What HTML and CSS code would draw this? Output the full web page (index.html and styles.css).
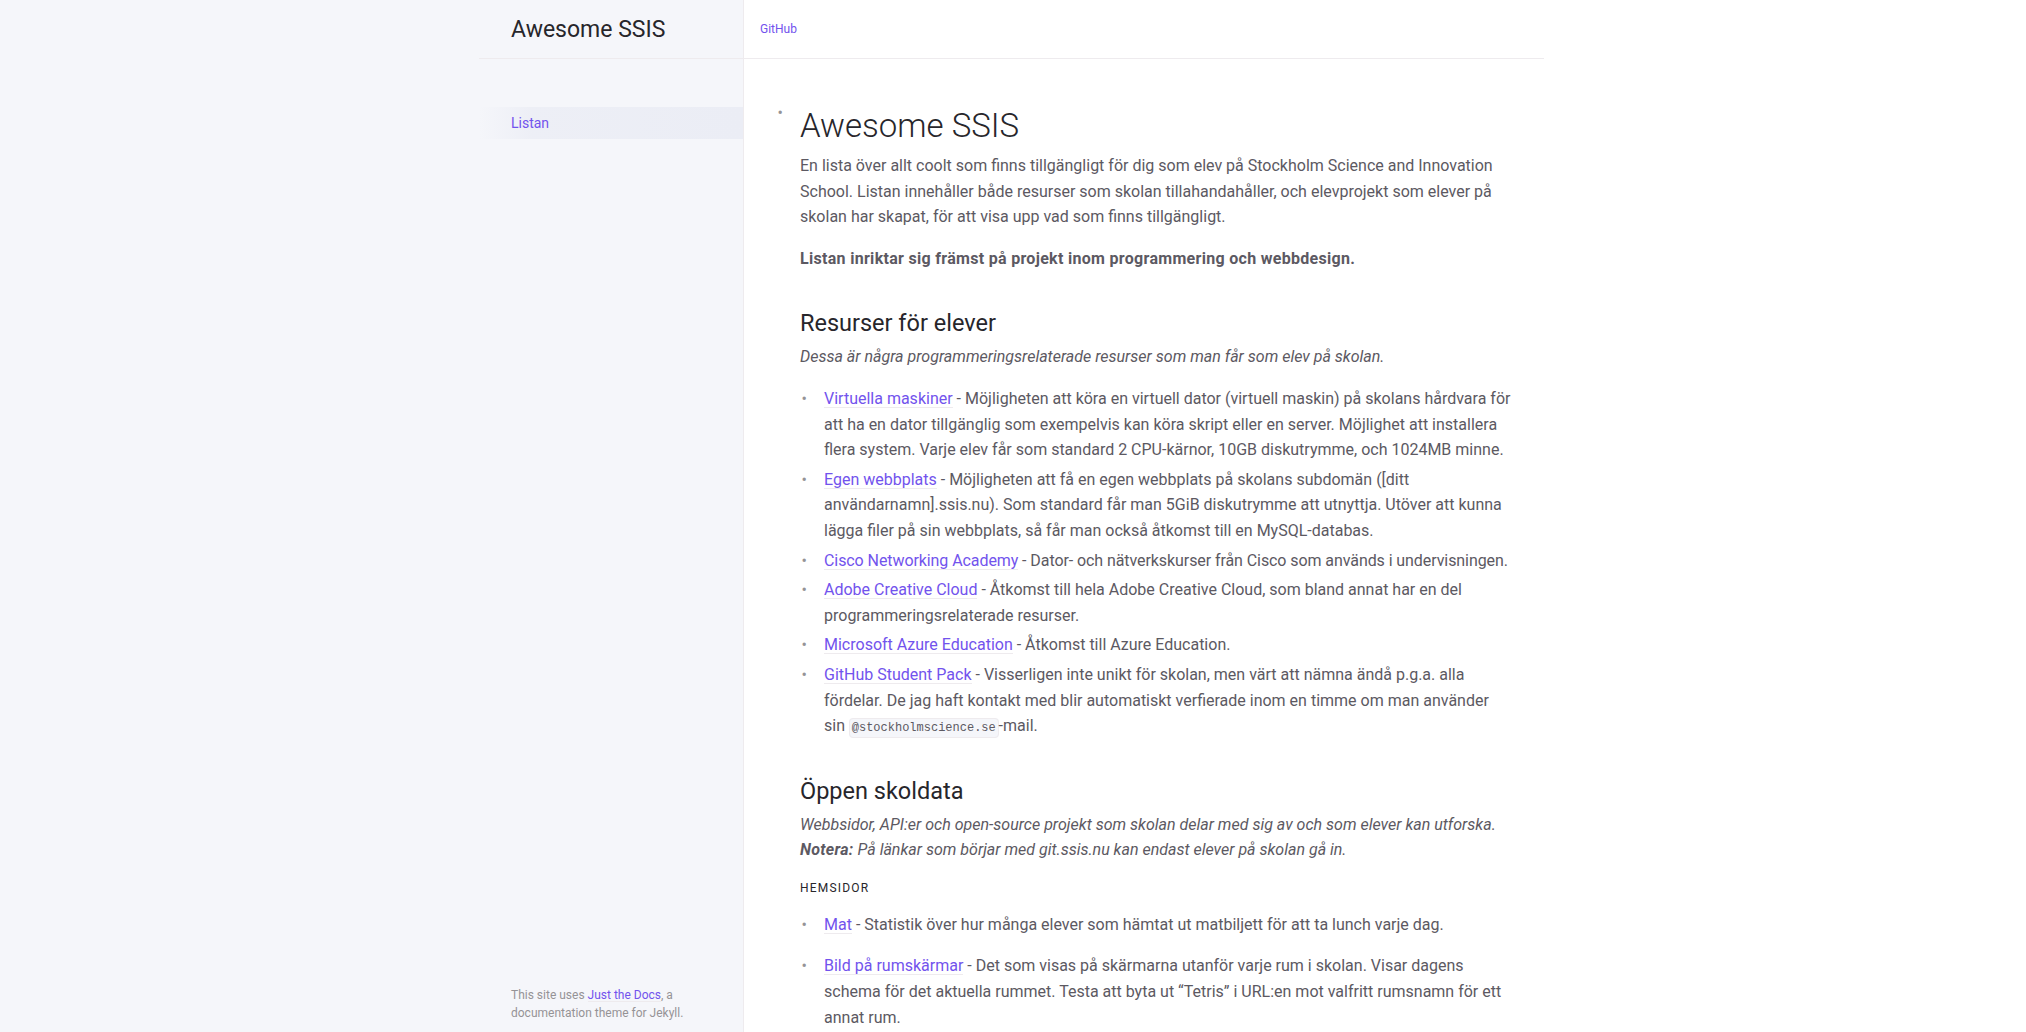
FILE: index.html
```html
<!DOCTYPE html>
<html lang="sv">
<head>
<meta charset="utf-8">
<title>Awesome SSIS</title>
<link rel="stylesheet" href="styles.css">
</head>
<body>
<div class="page">
  <aside class="side-bar">
    <div class="site-header">
      <a class="site-title" href="#">Awesome SSIS</a>
    </div>
    <nav class="site-nav">
      <ul class="nav-list">
        <li class="nav-list-item"><a class="nav-list-link active" href="#">Listan</a></li>
      </ul>
    </nav>
    <footer class="site-footer">
      This site uses <a class="link" href="#">Just the Docs</a>, a documentation theme for Jekyll.
    </footer>
  </aside>
  <div class="main">
    <div class="main-header">
      <a class="aux-link" href="#">GitHub</a>
    </div>
    <div class="main-content-wrap">
      <div class="main-content">
        <ul class="list">
          <li class="page-item">
            <h1 class="title">Awesome SSIS</h1>
            <p>En lista över allt coolt som finns tillgängligt för dig som elev på Stockholm Science and Innovation School. Listan innehåller både resurser som skolan tillahandahåller, och elevprojekt som elever på skolan har skapat, för att visa upp vad som finns tillgängligt.</p>
            <p><strong>Listan inriktar sig främst på projekt inom programmering och webbdesign.</strong></p>

            <h2 class="section">Resurser för elever</h2>
            <p><em>Dessa är några programmeringsrelaterade resurser som man får som elev på skolan.</em></p>
            <ul class="list">
              <li><a class="link" href="#">Virtuella maskiner</a> - Möjligheten att köra en virtuell dator (virtuell maskin) på skolans hårdvara för att ha en dator tillgänglig som exempelvis kan köra skript eller en server. Möjlighet att installera flera system. Varje elev får som standard 2 CPU-kärnor, 10GB diskutrymme, och 1024MB minne.</li>
              <li><a class="link" href="#">Egen webbplats</a> - Möjligheten att få en egen webbplats på skolans subdomän ([ditt användarnamn].ssis.nu). Som standard får man 5GiB diskutrymme att utnyttja. Utöver att kunna lägga filer på sin webbplats, så får man också åtkomst till en MySQL-databas.</li>
              <li class="fit"><a class="link" href="#">Cisco Networking Academy</a> - Dator- och nätverkskurser från Cisco som används i undervisningen.</li>
              <li><a class="link" href="#">Adobe Creative Cloud</a> - Åtkomst till hela Adobe Creative Cloud, som bland annat har en del programmeringsrelaterade resurser.</li>
              <li><a class="link" href="#">Microsoft Azure Education</a> - Åtkomst till Azure Education.</li>
              <li><a class="link" href="#">GitHub Student Pack</a> - Visserligen inte unikt för skolan, men värt att nämna ändå p.g.a. alla fördelar. De jag haft kontakt med blir automatiskt verfierade inom en timme om man använder sin <code class="code">@stockholmscience.se</code>-mail.</li>
            </ul>

            <h2 class="section">Öppen skoldata</h2>
            <p><em>Webbsidor, API:er och open-source projekt som skolan delar med sig av och som elever kan utforska.<br><strong>Notera:</strong> På länkar som börjar med git.ssis.nu kan endast elever på skolan gå in.</em></p>
            <h4 class="subsection">Hemsidor</h4>
            <ul class="list loose">
              <li><p><a class="link" href="#">Mat</a> - Statistik över hur många elever som hämtat ut matbiljett för att ta lunch varje dag.</p></li>
              <li><p><a class="link" href="#">Bild på rumskärmar</a> - Det som visas på skärmarna utanför varje rum i skolan. Visar dagens schema för det aktuella rummet. Testa att byta ut “Tetris” i URL:en mot valfritt rumsnamn för ett annat rum.</p></li>
            </ul>
          </li>
        </ul>
      </div>
    </div>
  </div>
</div>
</body>
</html>
```

FILE: styles.css
```css
* { box-sizing: border-box; }

html, body {
  margin: 0;
  padding: 0;
  height: 100%;
  overflow: hidden;
}

body {
  font-family: Roboto, "Noto Sans", "Liberation Sans", sans-serif;
  font-size: 16px;
  line-height: 1.4;
  color: #5c5962;
  background-color: #ffffff;
}

a { color: #7253ed; text-decoration: none; }

.page {
  display: flex;
  height: 100vh;
}

/* ---------- sidebar ---------- */
.side-bar {
  flex: 0 0 744px;
  display: flex;
  flex-direction: column;
  align-items: flex-end;
  background-color: #f5f6fa;
  border-right: 1px solid #eeebee;
}

.site-header {
  flex-shrink: 0;
  width: 264px;
  height: 59px;
  display: flex;
  align-items: center;
  border-bottom: 1px solid #eeebee;
}

.site-title {
  padding: 3px 32px 0;
  font-size: 23px;
  line-height: 1.25;
  color: #27262b;
}

.site-nav {
  width: 264px;
  padding-top: 48px;
}

.nav-list {
  list-style: none;
  margin: 0;
  padding: 0;
}

.nav-list-link {
  display: block;
  padding: 4px 32px;
  font-size: 14px;
  line-height: 24px;
  color: #7253ed;
}

.nav-list-link.active {
  background-image: linear-gradient(-90deg, #ebedf5 0%, rgba(235, 237, 245, 0.8) 80%, rgba(235, 237, 245, 0) 100%);
}

.site-footer {
  width: 264px;
  margin-top: auto;
  padding: 0 32px 10px;
  font-size: 12px;
  line-height: 18px;
  color: #959396;
}

/* ---------- main ---------- */
.main {
  flex: 0 0 800px;
  display: block;
}

.main-header {
  height: 59px;
  display: flex;
  align-items: center;
  border-bottom: 1px solid #eeebee;
}

.aux-link {
  padding: 0 16px;
  font-size: 12px;
  color: #7253ed;
}

.main-content-wrap {
  padding: 33px 32px 32px;
}

.main-content {
  line-height: 1.6;
}

.main-content p {
  margin: 0 0 16px;
}

.list {
  list-style: none;
  margin: 8px 0 0;
  padding-left: 1.5em;
}

.list > li {
  position: relative;
}

.list > li + li {
  margin-top: 4px;
}

.list > li::before {
  position: absolute;
  margin-left: -1.4em;
  color: #959396;
  content: "•";
}

.list > li.page-item {
  display: flow-root;
}

.list > li.fit {
  letter-spacing: -0.08px;
}

.list.loose {
  margin-top: 16px;
}

.title {
  margin: 6px 0 7px;
  font-size: 33px;
  font-weight: 300;
  line-height: 40px;
  color: #27262b;
}

.section {
  margin: 37px 0 6px;
  font-size: 23.5px;
  font-weight: 400;
  line-height: 30px;
  color: #27262b;
}

.subsection {
  margin: 18px 0 3px;
  font-size: 12px;
  font-weight: 400;
  line-height: 1.25;
  letter-spacing: 0.1em;
  text-transform: uppercase;
  color: #27262b;
}

strong {
  font-weight: 700;
  letter-spacing: 0.3px;
}

.link {
  background-image: linear-gradient(#eeebee, #eeebee);
  background-repeat: repeat-x;
  background-position: 0 100%;
  background-size: 1px 1px;
}

.main-content .link { white-space: nowrap; }

.code {
  font-family: "Liberation Mono", "DejaVu Sans Mono", monospace;
  font-size: 12px;
  line-height: 1.4;
  padding: 0.2em 0.15em;
  background-color: #f5f6fa;
  border: 1px solid #eeebee;
  border-radius: 4px;
}
```
